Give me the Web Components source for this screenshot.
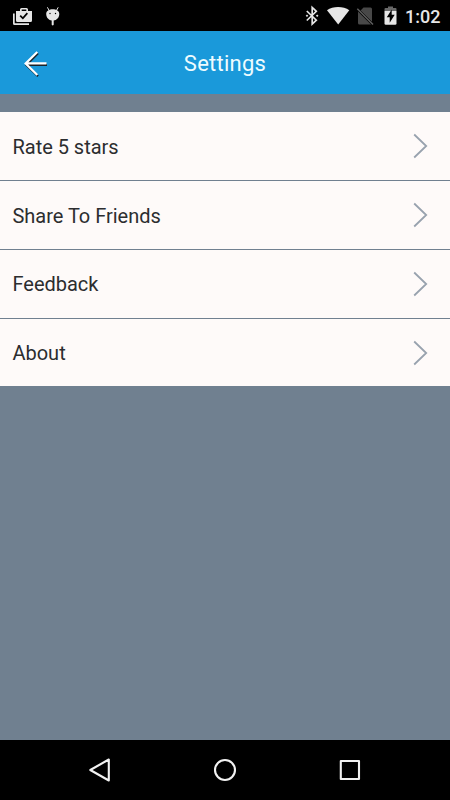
<!DOCTYPE html>
<html lang="en">
<head>
<meta charset="utf-8">
<meta name="viewport" content="width=device-width">
<title>Settings</title>
<style>
html, body { margin: 0; height: 100%; overflow: hidden; background: #708090; font-family: Roboto, "Noto Sans", sans-serif; }
</style>
</head>
<body>
<settings-screen></settings-screen>
<script>
class BaseElement extends HTMLElement {
  constructor() {
    super();
    this.attachShadow({ mode: 'open' }).innerHTML = this.constructor.markup;
  }
}

class StatusBar extends BaseElement {
  static markup = `
  <style>
    :host { display: flex; align-items: center; height: 31px; box-sizing: border-box; padding: 0 9px 0 12px; background: #000; color: #e6e6e6; }
    svg { display: block; flex: none; }
    .left, .right { display: flex; align-items: center; height: 31px; }
    .left { margin-right: auto; gap: 10px; }
    time { font-size: 18px; font-weight: 500; line-height: 31px; margin-left: 5px; padding-top: 1px; width: 36px; white-space: nowrap; }
  </style>
  <div class="left">
    <svg width="22" height="31" viewBox="12 0 22 31"><path fill="#e6e6e6" fill-rule="evenodd" d="M16 11h4V9.500Q20 8 21.500 8H26.500Q28 8 28 9.500V11H32V20.500Q32 22 30.500 22H17.500Q16 22 16 20.500ZM21.700 11H26.300V9.600H21.700ZM20.800 15L19.600 16.300L22.900 19.400L28 13.700L26.700 12.500L22.800 16.900Z"/><path fill="#e6e6e6" d="M13 13.500h1.700v9.800H29V25H14.500Q13 25 13 23.500Z"/></svg>
    <svg width="18" height="31" viewBox="44 0 18 31"><path fill="#e6e6e6" d="M46.200 14C46.200 7.800 59.300 7.800 59.300 14C59.300 17.800 56.500 20.300 53.700 20.500V24.800Q52.700 26.300 51.700 24.800V20.500C49 20.300 46.200 17.800 46.200 14Z"/><path d="M49.400 11L47.400 7.300M56.200 11L58.200 7.300" stroke="#e6e6e6" stroke-width="1"/><circle cx="50" cy="13.500" r=".7"/><circle cx="55.500" cy="13.500" r=".7"/></svg>
  </div>
  <div class="right">
    <svg width="22" height="31" viewBox="305 0 22 31"><path d="M306.800 11L316.300 20.200L312.200 24V7.500L316.300 11.300L306.800 20.500" fill="none" stroke="#e6e6e6" stroke-width="1.700"/><path fill="#e6e6e6" d="M307 14.500l1.300 1.300-1.300 1.300-1.300-1.300zM317.200 14.500l1.300 1.300-1.300 1.300-1.300-1.300z"/></svg>
    <svg width="28" height="31" viewBox="327 0 28 31"><path fill="#e6e6e6" d="M327 10.300C333 6 343.200 6 349.300 10.300L338.200 24.500Z"/></svg>
    <svg width="28" height="31" viewBox="355 0 28 31"><path fill="#484848" d="M363.500 7.500H370.500Q372 7.500 372 9V22L360.300 10.700ZM358 11.500L371 24.500H359.500Q358 24.500 358 23Z"/><path d="M358 8.300L373.500 23.800" stroke="#000" stroke-width=".8"/><path d="M357.300 8.800L373 24.500" stroke="#606060" stroke-width="1.400"/></svg>
    <svg width="17" height="31" viewBox="383 0 17 31"><path fill="#686868" d="M384.500 9Q384.500 8 385.500 8H388V6.500H393V8H395.500Q396.500 8 396.500 9V11H384.500Z"/><path fill="#e6e6e6" d="M384.500 11H396.500V23.500Q396.500 24.800 395.200 24.800H385.800Q384.500 24.800 384.500 23.500Z"/><path d="M391.700 9.500L386.800 17.300H389.700V22.800L394.700 14.800H391.700Z"/></svg>
    <time>1:02</time>
  </div>`;
}

class TitleBar extends BaseElement {
  static markup = `
  <style>
    :host { display: grid; grid-template-columns: 72px 1fr 72px; align-items: center; height: 63px; background: #1a99da; color: #eefcff; }
    svg { display: block; }
    h1 { margin: 0; padding-top: 2px; text-align: center; font-size: 22px; line-height: 26px; font-weight: 400; letter-spacing: .25px; }
  </style>
  <svg width="72" height="63" viewBox="0 31 72 63" fill="none" stroke-width="2.200"><path stroke="#18222a" d="M38 53.300L26.300 65L38 76.300M27 64.900H47"/><path stroke="#fff" d="M37.300 52L25.600 63.500L37.300 75M26 63.400H46.500"/></svg>
  <h1><slot></slot></h1>`;
}

class SettingsItem extends BaseElement {
  static markup = `
  <style>
    :host { display: flex; align-items: center; justify-content: space-between; background: #fefaf9; color: #2c2d2f; padding: 0 22px 0 12.500px; font-size: 20px; line-height: 24px; }
    span { padding-top: var(--label-offset, 0); letter-spacing: -.02px; }
    svg { display: block; }
  </style>
  <span><slot></slot></span>
  <svg width="16" height="26" viewBox="0 0 16 26"><path d="M2.200 1.500L14.200 13L2.200 24.500" fill="none" stroke="#98a2ae" stroke-width="1.800"/></svg>`;
}

class SettingsList extends BaseElement {
  static markup = `
  <style>
    :host { display: grid; grid-template-rows: 68px 68px 68px 67px; row-gap: 1px; margin-top: 18px; }
    ::slotted(*) { --label-offset: 1px; }
    ::slotted(:nth-child(3)) { --label-offset: 0px; }
  </style>
  <slot></slot>`;
}

class NavigationBar extends BaseElement {
  static markup = `
  <style>
    :host { display: flex; align-items: center; justify-content: center; gap: 101px; height: 60px; margin-top: auto; background: #000; }
    svg { display: block; }
  </style>
  <svg width="24" height="24" viewBox="0 0 24 24" fill="none" stroke="#f2f2f2" stroke-width="2.100" stroke-linejoin="round"><path d="M20.800 1.500V22.500L2.300 12Z"/></svg>
  <svg width="24" height="24" viewBox="0 0 24 24" fill="none" stroke="#f2f2f2" stroke-width="2.100"><circle cx="12" cy="12" r="10"/></svg>
  <svg width="24" height="24" viewBox="0 0 24 24" fill="none" stroke="#f2f2f2" stroke-width="2.100" stroke-linejoin="round"><rect x="2.800" y="3" width="18.200" height="18"/></svg>`;
}

class SettingsScreen extends BaseElement {
  static markup = `
  <style>
    :host { display: flex; flex-direction: column; width: 100%; height: 100vh; background: #708090; }
  </style>
  <status-bar></status-bar>
  <title-bar>Settings</title-bar>
  <settings-list>
    <settings-item>Rate 5 stars</settings-item>
    <settings-item>Share To Friends</settings-item>
    <settings-item>Feedback</settings-item>
    <settings-item>About</settings-item>
  </settings-list>
  <navigation-bar></navigation-bar>`;
}

customElements.define('status-bar', StatusBar);
customElements.define('title-bar', TitleBar);
customElements.define('settings-item', SettingsItem);
customElements.define('settings-list', SettingsList);
customElements.define('navigation-bar', NavigationBar);
customElements.define('settings-screen', SettingsScreen);
</script>
</body>
</html>
